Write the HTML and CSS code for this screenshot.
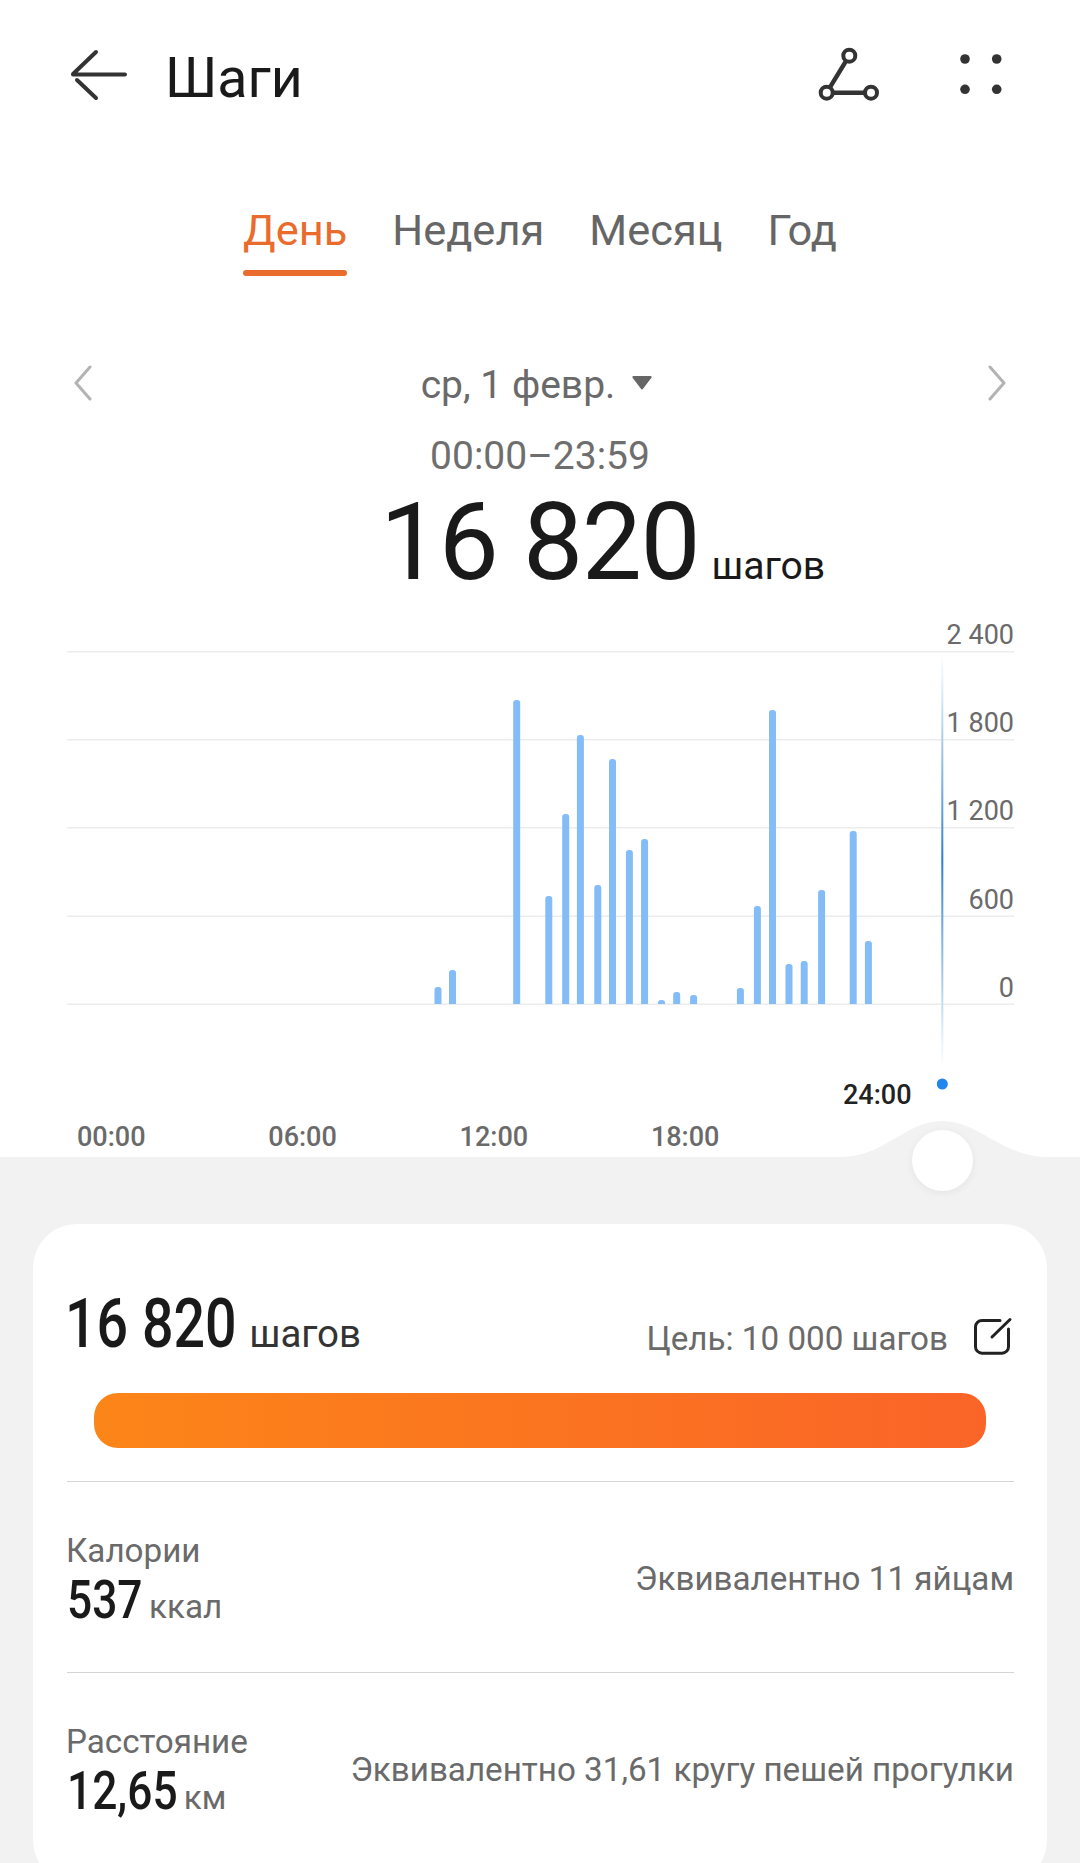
FILE: index.html
```html
<!DOCTYPE html>
<html lang="ru">
<head>
<meta charset="utf-8">
<title>Шаги</title>
<link rel="stylesheet" href="styles.css">
</head>
<body>
<main class="page">
  <section class="top">
    <header class="appbar">
      <svg class="icon-back" viewBox="70 44 60 60"><path d="M125 74.500H73M96 52 73 74M77 80 96 98"/></svg>
      <h1 class="title">Шаги</h1>
      <svg class="icon-actions" viewBox="815 44 190 60">
        <path class="link" d="M849.300 55.700 826.700 92.700H871"/>
        <circle class="node" cx="849.300" cy="55.700" r="6"/>
        <circle class="node" cx="826.700" cy="92.700" r="6"/>
        <circle class="node" cx="871" cy="92.700" r="6"/>
        <circle class="dot" cx="965" cy="59" r="4.800"/>
        <circle class="dot" cx="996.700" cy="59" r="4.800"/>
        <circle class="dot" cx="965" cy="89.300" r="4.800"/>
        <circle class="dot" cx="996.700" cy="89.300" r="4.800"/>
      </svg>
    </header>

    <nav class="tabs">
      <a class="tab tab-active">День</a>
      <a class="tab">Неделя</a>
      <a class="tab">Месяц</a>
      <a class="tab">Год</a>
    </nav>

    <div class="date-row">
      <svg class="chevron" viewBox="0 0 20 36"><path d="M17 2 3 18 17 34"/></svg>
      <div class="date"><span>ср, 1 февр.</span><svg class="caret" viewBox="0 0 20 14"><path d="M2 2H18L10 12.500Z"/></svg></div>
      <svg class="chevron" viewBox="0 0 20 36"><path d="M3 2 17 18 3 34"/></svg>
    </div>
    <div class="range">00:00–23:59</div>
    <div class="total"><span class="total-num">16 820</span><span class="total-unit">шагов</span></div>

    <div class="chart">
      <svg class="chart-svg" viewBox="0 620 1080 537">
        <defs>
          <clipPath id="plot"><rect x="0" y="620" width="1080" height="384"/></clipPath>
          <linearGradient id="cursor" x1="0" y1="0" x2="0" y2="1">
            <stop offset="0" stop-color="#fff"/>
            <stop offset=".12" stop-color="#cfe3f7"/>
            <stop offset=".5" stop-color="#2b80d2"/>
            <stop offset=".88" stop-color="#cfe3f7"/>
            <stop offset="1" stop-color="#fff"/>
          </linearGradient>
        </defs>
        <g class="grid">
          <rect x="67" y="651" width="947" height="1.500"/>
          <rect x="67" y="739" width="947" height="1.500"/>
          <rect x="67" y="827" width="947" height="1.500"/>
          <rect x="67" y="915.500" width="947" height="1.500"/>
          <rect x="67" y="1003.500" width="947" height="1.500"/>
        </g>
        <g class="bars" clip-path="url(#plot)">
          <rect x="434.500" y="987" width="7" height="30" rx="3"/>
          <rect x="449" y="970" width="7" height="50" rx="3"/>
          <rect x="513.200" y="700" width="7" height="320" rx="3"/>
          <rect x="545.300" y="896" width="7" height="120" rx="3"/>
          <rect x="562.200" y="814" width="7" height="200" rx="3"/>
          <rect x="576.900" y="735" width="7" height="280" rx="3"/>
          <rect x="594.300" y="885" width="7" height="130" rx="3"/>
          <rect x="609" y="759" width="7" height="260" rx="3"/>
          <rect x="625.900" y="850" width="7" height="170" rx="3"/>
          <rect x="641.100" y="839" width="7" height="180" rx="3"/>
          <rect x="658" y="1000" width="7" height="20" rx="3"/>
          <rect x="673.200" y="992" width="7" height="30" rx="3"/>
          <rect x="690.100" y="995" width="7" height="30" rx="3"/>
          <rect x="736.900" y="988" width="7" height="30" rx="3"/>
          <rect x="753.900" y="906" width="7" height="110" rx="3"/>
          <rect x="769" y="710" width="7" height="310" rx="3"/>
          <rect x="785.500" y="964" width="7" height="50" rx="3"/>
          <rect x="800.700" y="961" width="7" height="60" rx="3"/>
          <rect x="818.100" y="890" width="7" height="130" rx="3"/>
          <rect x="849.700" y="831" width="7" height="190" rx="3"/>
          <rect x="864.900" y="941" width="7" height="80" rx="3"/>
        </g>
        <rect x="941.300" y="655" width="2" height="410" fill="url(#cursor)"/>
        <circle class="cursor-dot" cx="942.300" cy="1084" r="5.500"/>
      </svg>
      <ul class="y-axis">
        <li>2 400</li><li>1 800</li><li>1 200</li><li>600</li><li>0</li>
      </ul>
      <span class="now-label">24:00</span>
      <div class="x-axis">
        <span>00:00</span><span>06:00</span><span>12:00</span><span>18:00</span>
      </div>
      <svg class="hump" viewBox="840 0 210 38"><path d="M840 37C885 37 905 1 942 1C980 1 1000 37 1050 37V38H840Z"/></svg>
      <div class="knob"></div>
    </div>
  </section>

  <section class="card">
    <div class="summary">
      <div class="summary-head">
        <div class="metric"><span class="num num-lg">16 820</span><span class="unit unit-dark">шагов</span></div>
        <div class="goal">
          <span class="goal-text">Цель: 10 000 шагов</span>
          <svg class="icon-edit" viewBox="973 1318 40 40"><path d="M1000 1321.500H982a6.500 6.500 0 0 0-6.500 6.500V1347.700a6.500 6.500 0 0 0 6.500 6.500H1002a6.500 6.500 0 0 0 6.500-6.500V1330M992 1338 1010 1320.500"/></svg>
        </div>
      </div>
      <div class="progress"></div>
    </div>
    <div class="row">
      <div class="row-main">
        <div class="row-label">Калории</div>
        <div class="metric metric-row"><span class="num num-cal">537</span><span class="unit">ккал</span></div>
      </div>
      <div class="row-note">Эквивалентно 11 яйцам</div>
    </div>
    <div class="row">
      <div class="row-main">
        <div class="row-label">Расстояние</div>
        <div class="metric metric-row"><span class="num num-dist">12,65</span><span class="unit">км</span></div>
      </div>
      <div class="row-note">Эквивалентно 31,61 кругу пешей прогулки</div>
    </div>
  </section>
</main>
</body>
</html>
```
FILE: styles.css
```css
* { box-sizing: border-box; }
html, body { margin: 0; padding: 0; }
body { background: #f2f2f2; font-family: Roboto, "Noto Sans", sans-serif; color: #1a1a1a; }
.page { width: 1080px; height: 1863px; overflow: hidden; }

.top { height: 1157px; background: #fff; display: flex; flex-direction: column; position: relative; }

.appbar { height: 154px; display: flex; align-items: center; padding-left: 70px; flex: none; }
.icon-back { width: 60px; height: 60px; fill: none; stroke: #333; stroke-width: 4; stroke-linecap: round; stroke-linejoin: round; margin-top: -6px; }
.title { margin: 3px 0 0 35px; font-size: 55.500px; font-weight: 400; line-height: 60px; }
.icon-actions { width: 190px; height: 60px; margin-left: auto; margin-right: 75px; margin-top: -6px; }
.link { fill: none; stroke: #333; stroke-width: 4.500; }
.node { fill: #fff; stroke: #333; stroke-width: 4; }
.dot { fill: #333; }

.tabs { display: flex; justify-content: center; gap: 45px; margin-top: 53px; flex: none; }
.tab { position: relative; font-size: 43.400px; line-height: 48px; color: #666; padding-bottom: 21px; }
.tab-active { color: #e96c2c; }
.tab-active::after { content: ""; position: absolute; left: 0; right: 0; bottom: 0; height: 6px; border-radius: 3px; background: #e96c2c; }

.date-row { display: flex; justify-content: space-between; align-items: center; padding: 0 73px; margin-top: 87px; height: 44px; flex: none; }
.chevron { width: 20px; height: 36px; fill: none; stroke: #b3b3b3; stroke-width: 3; stroke-linecap: round; stroke-linejoin: round; margin-top: -4px; }
.date { display: flex; align-items: center; gap: 16px; font-size: 39px; line-height: 44px; color: #6a6a6a; margin-right: 6px; }
.caret { width: 22px; height: 15px; fill: #666; stroke: #666; stroke-width: 2; stroke-linejoin: round; margin-top: -6px; }

.range { margin-top: 27px; text-align: center; font-size: 39px; line-height: 44px; color: #6e6e6e; flex: none; }
.total { display: flex; align-items: baseline; padding-left: 380px; margin-top: 5px; line-height: 120px; height: 120px; flex: none; }
.total-num { font-size: 107px; font-weight: 400; letter-spacing: -1.300px; }
.total-unit { font-size: 39.200px; margin-left: 12px; }

.chart { position: relative; height: 537px; margin-top: auto; flex: none; }
.chart-svg { display: block; width: 1080px; height: 537px; }
.grid rect { fill: #ececec; }
.bars rect { fill: #83bcf7; }
.cursor-dot { fill: #1f86ee; }

.y-axis { position: absolute; top: -2px; right: 66px; margin: 0; padding: 0; list-style: none; text-align: right; font-size: 27px; color: #6a6a6a; }
.y-axis li { height: 88.200px; line-height: 34px; }
.now-label { position: absolute; left: 843px; top: 458px; font-size: 27px; font-weight: 500; line-height: 34px; color: #222; }
.x-axis { position: absolute; left: 77px; top: 500px; display: flex; font-size: 27px; font-weight: 500; line-height: 34px; color: #6a6a6a; }
.x-axis span { width: 191.300px; }
.hump { position: absolute; left: 840px; bottom: -1px; width: 210px; height: 38px; fill: #f2f2f2; }
.knob { position: absolute; left: 912px; top: 510px; width: 61px; height: 61px; border-radius: 50%; background: #fff; box-shadow: 0 2px 8px rgba(0, 0, 0, .06); }

.card { margin: 67px 33px 0; background: #fff; border-radius: 44px; height: 660px; padding: 0 33px 0 34px; }
.summary { height: 258px; border-bottom: 1.500px solid #d4d4d4; }
.summary-head { display: flex; justify-content: space-between; align-items: flex-end; height: 136px; }
.metric { display: flex; align-items: baseline; }
.metric-row { margin-top: 1px; }
.num { display: inline-block; font-size: 54px; font-weight: 500; line-height: 58px; color: #1a1a1a; transform: scaleX(.82); transform-origin: left center; }
.num-lg { font-size: 69px; line-height: 72px; margin: 0 -40px 0 -2px; transform: scaleX(.805); }
.num-cal { margin-right: -17px; }
.num-dist { margin-right: -25px; }
.unit { font-size: 33.200px; color: #6a6a6a; margin-left: 7px; }
.unit-dark { font-size: 38.500px; color: #333; margin-left: 11px; }
.goal { display: flex; align-items: center; gap: 25px; font-size: 33.200px; line-height: 40px; color: #6a6a6a; margin-bottom: 1px; }
.goal-text { margin-top: 4px; }
.icon-edit { width: 40px; height: 40px; fill: none; stroke: #222; stroke-width: 3; stroke-linecap: round; margin-right: 1px; }
.progress { height: 55px; margin: 33px 28px 0 27px; border-radius: 24px; background: linear-gradient(90deg, #fc8518, #fa6428); }

.row { height: 190.500px; display: flex; justify-content: space-between; align-items: center; border-bottom: 1.500px solid #d4d4d4; }
.row:last-child { border-bottom: 0; }
.row-main { padding-top: 8px; }
.row-label { margin-left: -1px; font-size: 33.200px; line-height: 38px; color: #6a6a6a; }
.row-note { font-size: 33.200px; color: #6a6a6a; margin-top: 4px; }
```
